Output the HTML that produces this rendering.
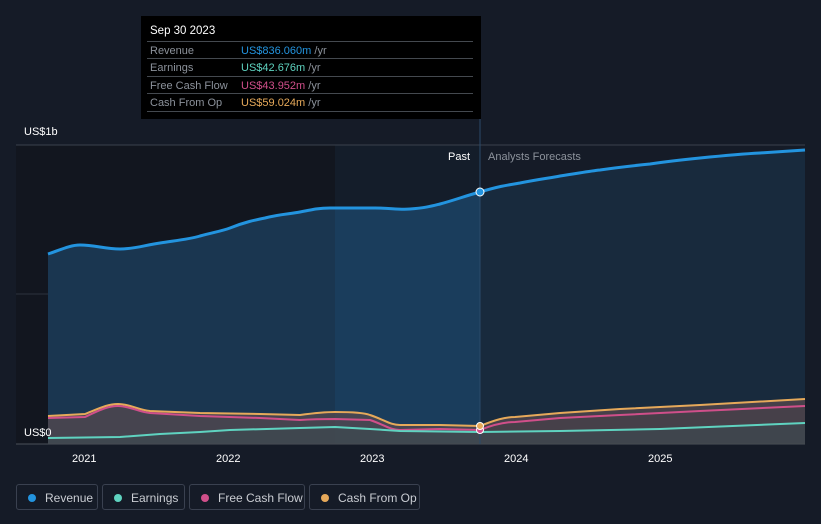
<!DOCTYPE html>
<html><head><meta charset="utf-8"><style>
body{margin:0;width:821px;height:524px;background:#151b27;font-family:"Liberation Sans",sans-serif;overflow:hidden;position:relative}
.tt{position:absolute;left:141px;top:16px;width:340px;height:103px;background:#000;font-size:11px}
.tt .h{color:#fff;font-size:11.5px;position:absolute;left:9px;top:9px}
.row{position:absolute;left:6px;width:326px;height:17px;border-top:1px solid #44494f;color:#8c929b}
.row span{position:absolute;top:3px}
.row .l{left:3px}.row .v{left:94px}
.leg{position:absolute;top:484px;height:26px;border:1px solid #3a4150;border-radius:3px;color:#c9ccd2;font-size:12px;line-height:26px;box-sizing:border-box}
.leg i{position:absolute;left:11px;top:9px;width:8px;height:8px;border-radius:50%}
.leg span{position:absolute;left:28px}
</style></head><body>
<svg width="821" height="524" style="position:absolute;left:0;top:0">
<defs>
<clipPath id="cp"><rect x="0" y="0" width="335" height="524"/></clipPath>
<clipPath id="ch"><rect x="335" y="0" width="145" height="524"/></clipPath>
<clipPath id="cf"><rect x="480" y="0" width="400" height="524"/></clipPath>
</defs>
<rect x="16" y="145" width="319" height="299" fill="#12161f"/>
<rect x="335" y="145" width="145" height="299" fill="#141d2a"/>
<line x1="16" y1="145" x2="805" y2="145" stroke="#3a414c"/>
<line x1="16" y1="294" x2="805" y2="294" stroke="#2c333e"/>
<g id="area">
<path clip-path="url(#cp)" d="M48,254 C60,250 70,245 80,245 C95,245 105,249 120,249 C135,249 145,245 160,243 C180,240 190,239 200,236 C215,232 222,231 230,228 C245,222 255,220 265,218 C280,214 290,214 300,212 C315,209 320,208 330,208 L375,208 L375,444 L48,444Z" fill="#1a3650"/>
<path clip-path="url(#ch)" d="M330,208 L375,208 C390,208 400,210 410,209 C425,208 432,206 440,204 C455,200 465,196 480,192 L480,444 L330,444Z" fill="#1a3d5c"/>
<path clip-path="url(#cf)" d="M480,192 C500,186 508,185 520,183 C540,179 550,178 560,176 C580,173 590,171 600,170 C620,167 630,166 650,164 C670,161 680,160 700,158 C720,156 740,154 760,153 L805,150 L805,444 L480,444Z" fill="#182a3d"/>
</g>
<line x1="16" y1="444" x2="805" y2="444" stroke="#4a505a"/>
<path d="M48,254 C60,250 70,245 80,245 C95,245 105,249 120,249 C135,249 145,245 160,243 C180,240 190,239 200,236 C215,232 222,231 230,228 C245,222 255,220 265,218 C280,214 290,214 300,212 C315,209 320,208 330,208 L375,208 C390,208 400,210 410,209 C425,208 432,206 440,204 C455,200 465,196 480,192 C500,186 508,185 520,183 C540,179 550,178 560,176 C580,173 590,171 600,170 C620,167 630,166 650,164 C670,161 680,160 700,158 C720,156 740,154 760,153 L805,150" fill="none" stroke="#2394df" stroke-width="3"/>
<path d="M48,416 L85,414 C100,408 108,404 118,404 C130,404 138,410 150,411 L200,413 L260,414 L300,415 C315,413 325,412 335,412 C355,412 365,413 370,415 C385,420 390,425 400,425 L440,425 L480,426 C495,420 505,417 515,417 L560,413 L620,409 L700,405 L805,399 L805,444 L48,444Z" fill="#5a4a4e" opacity="0.7"/>
<path d="M48,416 L85,414 C100,408 108,404 118,404 C130,404 138,410 150,411 L200,413 L260,414 L300,415 C315,413 325,412 335,412 C355,412 365,413 370,415 C385,420 390,425 400,425 L440,425 L480,426 C495,420 505,417 515,417 L560,413 L620,409 L700,405 L805,399" fill="none" stroke="#e6a95a" stroke-width="2"/>
<path d="M48,418 L85,417 C100,410 108,406 118,406 C130,406 138,412 150,413 L200,416 L260,418 L300,420 C315,419 325,419 335,419 L370,420 C385,425 390,430 400,430 L440,429 L480,430 C495,424 505,422 515,422 L560,418 L620,415 L700,411 L805,406" fill="none" stroke="#d04f8a" stroke-width="2"/>
<path d="M48,438 L120,437 L160,434 L200,432 L230,430 L300,428 L335,427 L370,429 L400,431 L480,432 L560,431 L660,429 L805,423 L805,444 L48,444Z" fill="#3b4a50" opacity="0.6"/>
<path d="M48,438 L120,437 L160,434 L200,432 L230,430 L300,428 L335,427 L370,429 L400,431 L480,432 L560,431 L660,429 L805,423" fill="none" stroke="#5fd3c0" stroke-width="2"/>
<line x1="480" y1="119" x2="480" y2="444" stroke="#2a4a6a"/>
<circle cx="480" cy="192" r="4" fill="#2394df" stroke="#fff" stroke-width="1"/>
<circle cx="480" cy="430" r="3.5" fill="#d04f8a" stroke="#fff" stroke-width="1"/>
<circle cx="480" cy="426" r="3.5" fill="#e6a95a" stroke="#fff" stroke-width="1"/>
<g font-family="Liberation Sans" font-size="11" fill="#fff">
<text x="24" y="135">US$1b</text>
<text x="24" y="436">US$0</text>
<text x="448" y="160">Past</text>
<text x="488" y="160" fill="#8c929b">Analysts Forecasts</text>
<text x="72" y="462">2021</text><text x="216" y="462">2022</text><text x="360" y="462">2023</text><text x="504" y="462">2024</text><text x="648" y="462">2025</text>
</g>
</svg>
<div class="tt"><div class="h">Sep 30 2023</div>
<div class="row" style="top:25px"><span class="l">Revenue</span><span class="v"><b style="font-weight:normal;color:#2394df">US$836.060m</b> /yr</span></div>
<div class="row" style="top:42px"><span class="l">Earnings</span><span class="v"><b style="font-weight:normal;color:#5fd3c0">US$42.676m</b> /yr</span></div>
<div class="row" style="top:60px"><span class="l">Free Cash Flow</span><span class="v"><b style="font-weight:normal;color:#d04f8a">US$43.952m</b> /yr</span></div>
<div class="row" style="top:77px"><span class="l">Cash From Op</span><span class="v"><b style="font-weight:normal;color:#e6a95a">US$59.024m</b> /yr</span></div>
<div class="row" style="top:95px;height:0"></div>
</div>
<div class="leg" style="left:16px;width:82px"><i style="background:#2394df"></i><span>Revenue</span></div>
<div class="leg" style="left:102px;width:83px"><i style="background:#5fd3c0"></i><span>Earnings</span></div>
<div class="leg" style="left:189px;width:116px"><i style="background:#d04f8a"></i><span>Free Cash Flow</span></div>
<div class="leg" style="left:309px;width:111px"><i style="background:#e6a95a"></i><span>Cash From Op</span></div>
</body></html>
